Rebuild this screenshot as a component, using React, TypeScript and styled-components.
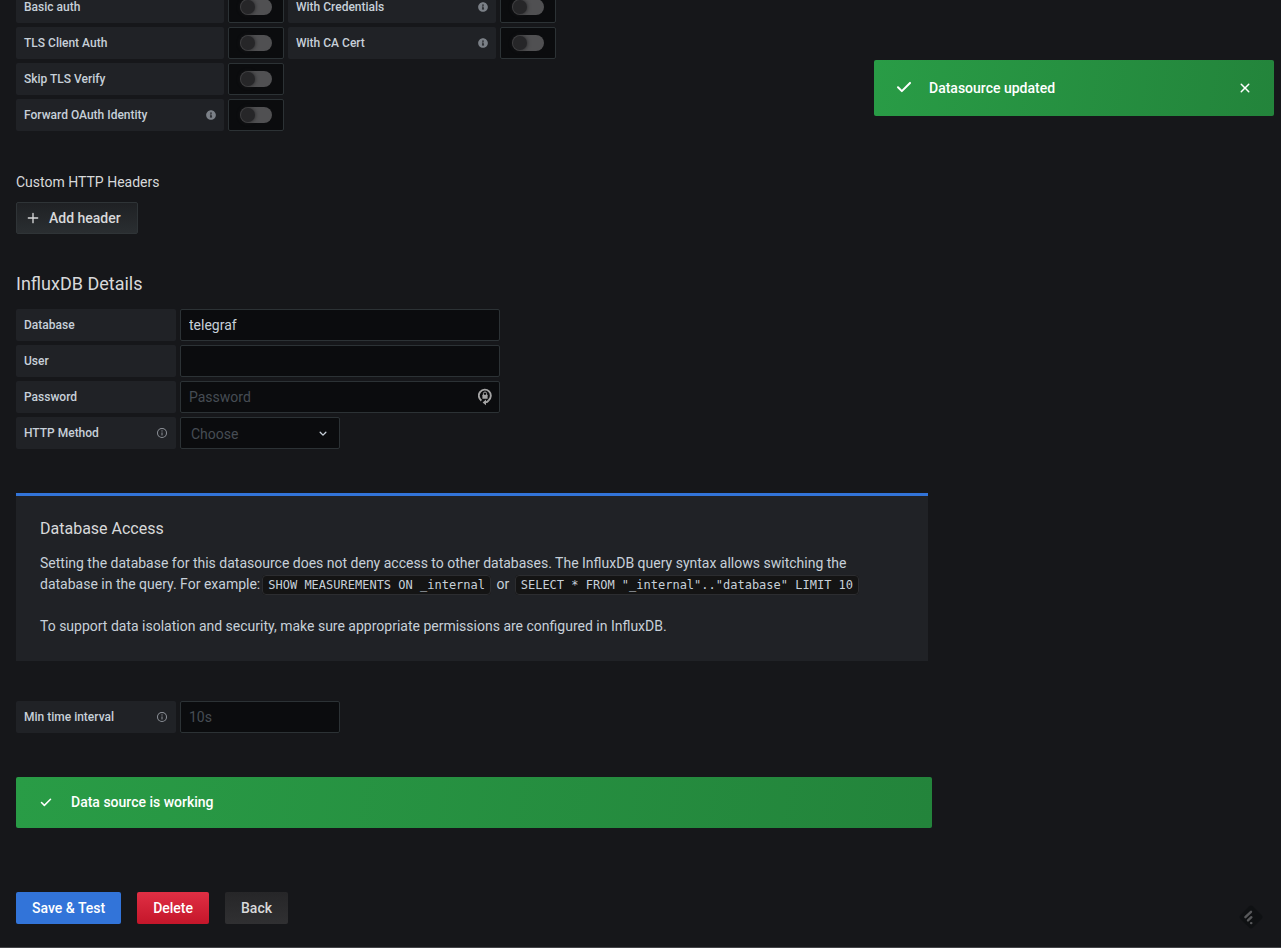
import React from "react";
import styled, { createGlobalStyle } from "styled-components";
import { FaInfoCircle } from "react-icons/fa";

const GlobalStyle = createGlobalStyle`
  *, *::before, *::after { box-sizing: border-box; }
  body {
    margin: 0;
    background: #16171a;
    color: #c7d0d9;
    font-family: Roboto, "Liberation Sans", sans-serif;
    font-size: 14px;
    line-height: 21px;
    -webkit-font-smoothing: antialiased;
  }
  button, input, select { font-family: inherit; font-size: 14px; }
`;

const Page = styled.main`
  min-height: 100vh;
  padding: 0 16px 23px;
  overflow: hidden;
  border-bottom: 1px solid #434447;
`;

const Section = styled.section<{ $top?: number }>`
  margin-top: ${(p) => p.$top ?? 0}px;
`;

const FieldStack = styled.div`
  display: flex;
  flex-direction: column;
  gap: 4px;
`;

const FieldRow = styled.div`
  display: flex;
  flex-wrap: wrap;
  gap: 4px;
`;

const FieldLabel = styled.label<{ $wide?: boolean }>`
  display: flex;
  align-items: center;
  justify-content: space-between;
  flex: none;
  width: ${(p) => (p.$wide ? 208 : 160)}px;
  height: 32px;
  padding: 0 8px;
  border-radius: 2px;
  background: #202226;
  font-size: 12px;
  font-weight: 500;
  line-height: 16px;
`;

const SwitchBox = styled.div`
  display: flex;
  align-items: center;
  justify-content: center;
  width: 56px;
  height: 32px;
  border: 1px solid #2c3235;
  border-radius: 2px;
  background: #0b0c0e;
`;

const Switch = styled.input`
  appearance: none;
  display: flex;
  align-items: center;
  width: 32px;
  height: 16px;
  margin: 0;
  padding: 0 1px;
  border-radius: 8px;
  background: #505052;
  cursor: pointer;

  &::before {
    content: "";
    width: 14px;
    height: 14px;
    border-radius: 50%;
    background: #262628;
    box-shadow: 0 0 4px #202022;
  }
  &:checked { justify-content: flex-end; background: #3274d9; }
`;

const TextInput = styled.input<{ $short?: boolean }>`
  width: ${(p) => (p.$short ? 160 : 320)}px;
  height: 32px;
  padding: 0 8px;
  border: 1px solid #2c3235;
  border-radius: 2px;
  background: #0b0c0e;
  color: #c7d0d9;
  outline: none;
  &::placeholder { color: #464c54; opacity: 1; }
  &:focus { border-color: #3274d9; }
`;

const Overlaid = styled.div`
  position: relative;
  display: flex;
`;

const OverlayIcon = styled.span<{ $right: number }>`
  position: absolute;
  top: 0;
  bottom: 0;
  right: ${(p) => p.$right}px;
  display: flex;
  align-items: center;
  pointer-events: none;
`;

const Select = styled.select`
  appearance: none;
  width: 160px;
  height: 32px;
  padding: 2px 32px 0 10px;
  border: 1px solid #2c3235;
  border-radius: 2px;
  background: #0b0c0e;
  color: #464c54;
  outline: none;
`;

const SmallHeading = styled.h3`
  margin: 0 0 8px;
  color: #d8d9da;
  font-size: 14px;
  font-weight: 400;
  line-height: 24px;
`;

const SectionHeading = styled.h2`
  margin: 0 0 12px;
  color: #d8d9da;
  font-size: 18px;
  font-weight: 400;
  line-height: 26px;
`;

const variants = {
  primary: "background: #3274d9; color: #fff;",
  danger: "background: linear-gradient(180deg, #e02f44, #c4162a); color: #fff;",
  plain: "background: linear-gradient(180deg, #262628, #303032); color: #d8d9da;",
  outline:
    "background: linear-gradient(180deg, #1f2124, #2a2e31); color: #d8d9da; border: 1px solid #2f3437;",
};

const Button = styled.button<{ $variant: keyof typeof variants }>`
  display: inline-flex;
  align-items: center;
  gap: 8px;
  height: 32px;
  padding: 0 16px;
  border: 0;
  border-radius: 2px;
  font-weight: 500;
  cursor: pointer;
  ${(p) => variants[p.$variant]}
`;

const AddButton = styled(Button)`
  padding: 0 16px 0 8px;
`;

const Actions = styled.div`
  display: flex;
  flex-wrap: wrap;
  gap: 16px;
  margin-top: 64px;
`;

const InfoBox = styled.aside`
  max-width: 912px;
  margin-top: 44px;
  padding: 21px 24px 24px;
  border-top: 3px solid #3274d9;
  background: #202226;
`;

const InfoTitle = styled.h4`
  margin: 0 0 12px;
  color: #d8d9da;
  font-size: 16px;
  font-weight: 400;
  line-height: 24px;
`;

const Paragraph = styled.p`
  max-width: 840px;
  margin: 0 0 20px;
  &:last-child { margin-bottom: 0; }
`;

const Code = styled.code`
  margin: 0 2px;
  padding: 2px 5px;
  border: 1px solid #2c2d30;
  border-radius: 4px;
  background: #141414;
  font-family: "DejaVu Sans Mono", monospace;
  font-size: 12px;
  white-space: nowrap;
`;

const successFill = "linear-gradient(100deg, #299c46, #23843b)";

const Alert = styled.div`
  display: flex;
  align-items: center;
  gap: 16px;
  max-width: 916px;
  height: 51px;
  margin-top: 44px;
  padding: 0 21px;
  border-radius: 2px;
  background: ${successFill};
  color: #fff;
  font-weight: 500;
`;

const Toast = styled.div`
  position: fixed;
  top: 60px;
  right: 7px;
  display: flex;
  align-items: center;
  gap: 13px;
  width: 400px;
  height: 56px;
  padding: 0 20px 0 18px;
  border-radius: 2px;
  background: ${successFill};
  color: #fff;
  font-weight: 500;
`;

const ToastText = styled.span`
  flex: 1;
`;

const CloseButton = styled.button`
  display: flex;
  padding: 0;
  border: 0;
  background: none;
  color: inherit;
  cursor: pointer;
`;

const Badge = styled.a`
  position: fixed;
  right: 18px;
  bottom: 19px;
  display: flex;
`;

const FilledInfo = () => <FaInfoCircle size={10} color="#7b8087" />;

const OutlineInfo = () => (
  <svg width="12" height="12" viewBox="0 0 24 24" fill="#8e9299" aria-hidden="true">
    <path d="M12 2a10 10 0 1 0 10 10A10 10 0 0 0 12 2Zm0 18a8 8 0 1 1 8-8 8 8 0 0 1-8 8Z" />
    <path d="M12 10.500a1 1 0 0 0-1 1V16a1 1 0 0 0 2 0v-4.500a1 1 0 0 0-1-1ZM12 6.600a1.250 1.250 0 1 0 1.250 1.250A1.250 1.250 0 0 0 12 6.600Z" />
  </svg>
);

const CheckIcon = ({ size }: { size: number }) => (
  <svg width={size} height={size} viewBox="0 0 24 24" fill="currentColor" aria-hidden="true">
    <path d="M18.710 6.210a1 1 0 0 0-1.420 0l-7.450 7.460-3.130-3.140A1 1 0 1 0 5.290 12l3.840 3.840a1 1 0 0 0 1.420 0l8.160-8.160a1 1 0 0 0 0-1.470Z" />
  </svg>
);

const CloseIcon = () => (
  <svg width="18" height="18" viewBox="0 0 24 24" fill="currentColor" aria-hidden="true">
    <path d="m13.410 12 4.300-4.290a1 1 0 1 0-1.420-1.420L12 10.590l-4.290-4.300a1 1 0 0 0-1.420 1.420l4.300 4.290-4.300 4.290a1 1 0 0 0 0 1.420 1 1 0 0 0 1.420 0l4.290-4.300 4.290 4.300a1 1 0 0 0 1.420 0 1 1 0 0 0 0-1.420Z" />
  </svg>
);

const PlusIcon = () => (
  <svg width="16" height="16" viewBox="0 0 24 24" fill="currentColor" aria-hidden="true">
    <path d="M19 11h-6V5a1 1 0 0 0-2 0v6H5a1 1 0 0 0 0 2h6v6a1 1 0 0 0 2 0v-6h6a1 1 0 0 0 0-2Z" />
  </svg>
);

const ChevronIcon = () => (
  <svg width="16" height="16" viewBox="0 0 24 24" fill="#c7d0d9" aria-hidden="true">
    <path d="M17 10.170a1 1 0 0 0-1.410 0L12 13.710 8.460 10.170a1 1 0 0 0-1.410 0 1 1 0 0 0 0 1.420l4.240 4.240a1 1 0 0 0 1.420 0L17 11.590a1 1 0 0 0 0-1.420Z" />
  </svg>
);

const KeyLockIcon = () => (
  <svg width="14" height="18" viewBox="0 0 14 18" fill="none" aria-hidden="true">
    <path d="M3.400 12.600A6 6 0 1 1 10.600 12.300" stroke="#a4a4a4" strokeWidth="1.900" />
    <path d="M10.800 12.300C10 13.600 8.600 14.400 7 14.400" stroke="#a4a4a4" strokeWidth="1.900" />
    <path d="M8 11.600v5.600L4.600 14.400Z" fill="#a4a4a4" />
    <rect x="4.400" y="6.800" width="5.200" height="4" rx="0.400" fill="#a4a4a4" />
    <path d="M5.400 7.200V5.600a1.600 1.600 0 0 1 3.200 0v1.600" stroke="#a4a4a4" strokeWidth="1" />
  </svg>
);

const FeedBadgeIcon = () => (
  <svg width="24" height="24" viewBox="0 0 24 24" aria-hidden="true">
    <path d="M10.400 1.200a2.300 2.300 0 0 1 3.200 0l9.200 9.200a2.300 2.300 0 0 1 0 3.200l-9.200 9.200a2.300 2.300 0 0 1-3.200 0l-9.200-9.200a2.300 2.300 0 0 1 0-3.200Z" fill="#0f1113" />
    <g stroke="#58595b" strokeWidth="2.400" strokeLinecap="round">
      <path d="M6.400 12.200l5.600-5.400" />
      <path d="M9 15.400l3.400-3.200" />
      <path d="M12.100 18.100h.2" />
    </g>
  </svg>
);

interface ToggleProps {
  id: string;
  label: string;
  info?: boolean;
}

const ToggleField = ({ id, label, info }: ToggleProps) => (
  <>
    <FieldLabel htmlFor={id} $wide>
      {label}
      {info && <FilledInfo />}
    </FieldLabel>
    <SwitchBox>
      <Switch id={id} type="checkbox" />
    </SwitchBox>
  </>
);

const toggleRows: ToggleProps[][] = [
  [
    { id: "basic-auth", label: "Basic auth" },
    { id: "with-credentials", label: "With Credentials", info: true },
  ],
  [
    { id: "tls-client-auth", label: "TLS Client Auth" },
    { id: "with-ca-cert", label: "With CA Cert", info: true },
  ],
  [{ id: "skip-tls-verify", label: "Skip TLS Verify" }],
  [{ id: "forward-oauth", label: "Forward OAuth Identity", info: true }],
];

export default function App() {
  return (
    <>
      <GlobalStyle />
      <Page>
        <Section $top={-9}>
          <FieldStack>
            {toggleRows.map((row) => (
              <FieldRow key={row[0].id}>
                {row.map((field) => (
                  <ToggleField key={field.id} {...field} />
                ))}
              </FieldRow>
            ))}
          </FieldStack>
        </Section>

        <Section $top={39}>
          <SmallHeading>Custom HTTP Headers</SmallHeading>
          <AddButton type="button" $variant="outline">
            <PlusIcon />
            Add header
          </AddButton>
        </Section>

        <Section $top={37}>
          <SectionHeading>InfluxDB Details</SectionHeading>
          <FieldStack>
            <FieldRow>
              <FieldLabel htmlFor="database">Database</FieldLabel>
              <TextInput id="database" type="text" defaultValue="telegraf" />
            </FieldRow>
            <FieldRow>
              <FieldLabel htmlFor="user">User</FieldLabel>
              <TextInput id="user" type="text" />
            </FieldRow>
            <FieldRow>
              <FieldLabel htmlFor="password">Password</FieldLabel>
              <Overlaid>
                <TextInput id="password" type="password" placeholder="Password" />
                <OverlayIcon $right={8}>
                  <KeyLockIcon />
                </OverlayIcon>
              </Overlaid>
            </FieldRow>
            <FieldRow>
              <FieldLabel htmlFor="http-method">
                HTTP Method
                <OutlineInfo />
              </FieldLabel>
              <Overlaid>
                <Select id="http-method" defaultValue="">
                  <option value="">Choose</option>
                  <option value="GET">GET</option>
                  <option value="POST">POST</option>
                </Select>
                <OverlayIcon $right={9}>
                  <ChevronIcon />
                </OverlayIcon>
              </Overlaid>
            </FieldRow>
          </FieldStack>
        </Section>

        <InfoBox>
          <InfoTitle>Database Access</InfoTitle>
          <Paragraph>
            Setting the database for this datasource does not deny access to other databases. The
            InfluxDB query syntax allows switching the database in the query. For example:
            <Code>SHOW MEASUREMENTS ON _internal</Code> or{" "}
            <Code>SELECT * FROM "_internal".."database" LIMIT 10</Code>
          </Paragraph>
          <Paragraph>
            To support data isolation and security, make sure appropriate permissions are configured
            in InfluxDB.
          </Paragraph>
        </InfoBox>

        <Section $top={40}>
          <FieldRow>
            <FieldLabel htmlFor="min-interval">
              Min time interval
              <OutlineInfo />
            </FieldLabel>
            <TextInput id="min-interval" type="text" placeholder="10s" $short />
          </FieldRow>
        </Section>

        <Alert role="status">
          <CheckIcon size={18} />
          Data source is working
        </Alert>

        <Actions>
          <Button type="submit" $variant="primary">Save &amp; Test</Button>
          <Button type="button" $variant="danger">Delete</Button>
          <Button type="button" $variant="plain">Back</Button>
        </Actions>
      </Page>

      <Toast role="alert">
        <CheckIcon size={24} />
        <ToastText>Datasource updated</ToastText>
        <CloseButton type="button" aria-label="Close">
          <CloseIcon />
        </CloseButton>
      </Toast>

      <Badge href="#" aria-label="Follow feed">
        <FeedBadgeIcon />
      </Badge>
    </>
  );
}
